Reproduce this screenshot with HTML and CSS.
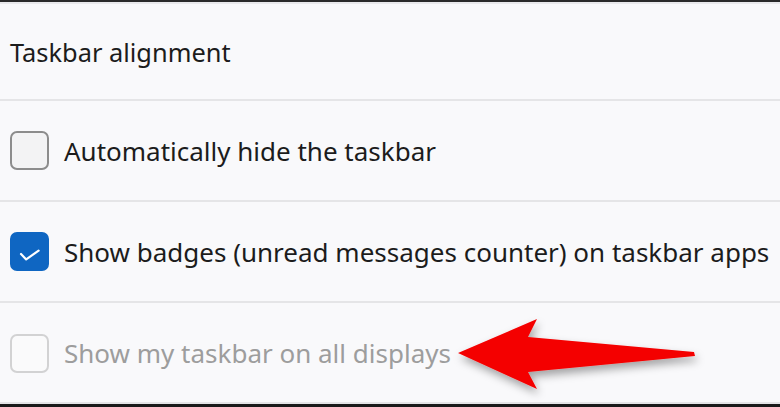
FILE: index.html
```html
<!DOCTYPE html>
<html lang="en">
<head>
    <meta charset="UTF-8">
    <meta name="viewport" content="width=device-width, initial-scale=1.0">
    <title>Taskbar behaviors</title>
    <link rel="stylesheet" href="styles.css">
</head>
<body>
    <div class="panel">
        <div class="row row-head">
            <span class="head-label">Taskbar alignment</span>
        </div>

        <div class="row">
            <span class="check"></span>
            <span class="label">Automatically hide the taskbar</span>
        </div>

        <div class="row">
            <span class="check checked">
                <svg width="39" height="39" viewBox="0 0 39 39">
                    <path d="M11 22 L16.2 27.4 L28.6 18.6" fill="none" stroke="#fff" stroke-width="2.2" stroke-linecap="round" stroke-linejoin="round"/>
                </svg>
            </span>
            <span class="label">Show badges (unread messages counter) on taskbar apps</span>
        </div>

        <div class="row row-last">
            <span class="check disabled"></span>
            <span class="label disabled-text">Show my taskbar on all displays</span>
        </div>
    </div>

    <!-- callout arrow pointing at the last option -->
    <svg class="arrow" width="780" height="407" viewBox="0 0 780 407">
        <defs>
            <filter id="shade" x="-10%" y="-20%" width="130%" height="160%">
                <feDropShadow dx="2" dy="5" stdDeviation="4" flood-color="#000" flood-opacity="0.35"/>
            </filter>
        </defs>
        <polygon points="458,353 537,319 528,337 694,352 695,356 528,372 537,389" fill="#f40404" filter="url(#shade)"/>
    </svg>
</body>
</html>
```

FILE: styles.css
```css
html, body {
    margin: 0;
    padding: 0;
}
body {
    width: 780px;
    height: 407px;
    overflow: hidden;
    background: #f9f9fb;
    font-family: 'Noto Sans', 'Open Sans', sans-serif;
    color: #1c1c1c;
    position: relative;
}
.panel {
    border-top: 2px solid #2a2a2a;
    border-bottom: 3px solid #1a1a1a;
    box-shadow: inset 0 2px 0 #e9e9ec, inset 0 -2px 0 #e4e4e6;
    height: 402px;
    display: flex;
    flex-direction: column;
}
.row {
    display: flex;
    align-items: center;
    padding-left: 10px;
    height: 99px;
    border-bottom: 2px solid #e5e5e7;
    flex: none;
}
.row-head {
    height: 97px;
}
.row-last {
    border-bottom: none;
    height: 100px;
}
.head-label {
    font-size: 25.4px;
    margin-top: 2px;
}
.label {
    font-size: 26px;
    margin-left: 15px;
}
.disabled-text {
    color: #9d9d9d;
}
.check {
    width: 35px;
    height: 35px;
    border: 2px solid #8c8c8c;
    border-radius: 7px;
    background: #f3f3f4;
    flex: none;
    position: relative;
}
.check.checked {
    background: #0f66c2;
    border-color: #0f66c2;
}
.check.checked svg {
    position: absolute;
    left: -2px;
    top: -2px;
}
.check.disabled {
    border-color: #d2d2d3;
    background: #fafafb;
}
.arrow {
    position: absolute;
    left: 0;
    top: 0;
}
```
